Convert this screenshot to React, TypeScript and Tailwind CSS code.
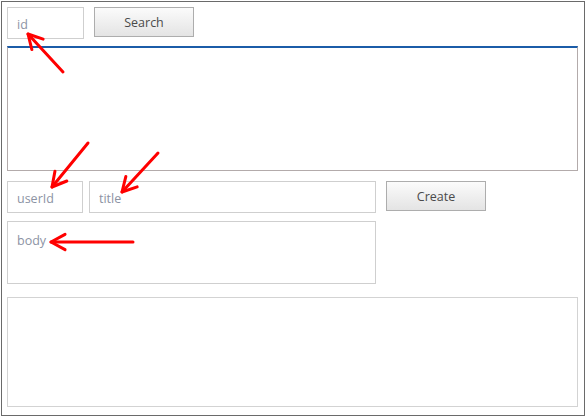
import React from "react";

const font = { fontFamily: '"Open Sans", "Noto Sans", sans-serif' };

function TextBox({ placeholder, className }: { placeholder: string; className: string }) {
  return (
    <input
      placeholder={placeholder}
      className={`border border-[#cfcfcf] bg-white pl-[9px] pt-[2px] text-[12.5px] text-[#444] placeholder:text-[#8c93a4] outline-none ${className}`}
      style={font}
    />
  );
}

function Button({ label }: { label: string }) {
  return (
    <button
      className="w-[100px] h-[30px] pt-[2px] border border-[#adadad] bg-gradient-to-b from-[#fbfbfb] to-[#e4e4e4] text-[12.5px] text-[#4a4a4a]"
      style={font}
    >
      {label}
    </button>
  );
}

// red annotation arrows drawn over the form
function Arrow({ x1, y1, x2, y2 }: { x1: number; y1: number; x2: number; y2: number }) {
  const a = Math.atan2(y1 - y2, x1 - x2);
  const len = 16;
  const spread = 0.5;
  const w1x = x2 + len * Math.cos(a + spread);
  const w1y = y2 + len * Math.sin(a + spread);
  const w2x = x2 + len * Math.cos(a - spread);
  const w2y = y2 + len * Math.sin(a - spread);
  return (
    <g stroke="#ff0000" strokeWidth={3} fill="none" strokeLinecap="round" strokeLinejoin="round">
      <line x1={x1} y1={y1} x2={x2} y2={y2} />
      <polyline points={`${w1x},${w1y} ${x2},${y2} ${w2x},${w2y}`} />
    </g>
  );
}

export default function App() {
  return (
    <div className="relative w-[585px] h-[416px] bg-white pt-px pl-px">
      <div className="w-[584px] h-[415px] border border-[#6a6a6a] p-[5px] flex flex-col">
        <div className="flex items-start gap-[10px]">
          <TextBox placeholder="id" className="w-[77px] h-[32px]" />
          <Button label="Search" />
        </div>

        <div className="mt-[7px] w-[571px] h-[125px] border border-[#b3abab] border-t-2 border-t-[#1b5ca8]" />

        <div className="mt-[10px] flex items-start">
          <TextBox placeholder="userId" className="w-[76px] h-[32px]" />
          <TextBox placeholder="title" className="ml-[6px] w-[287px] h-[32px]" />
          <div className="ml-[10px]">
            <Button label="Create" />
          </div>
        </div>

        <textarea
          placeholder="body"
          className="mt-[8px] w-[369px] h-[63px] resize-none border border-[#cfcfcf] pl-[9px] pt-[11px] text-[12.5px] leading-[16px] placeholder:text-[#8c93a4] outline-none"
          style={font}
        />

        <div className="mt-[13px] w-[571px] h-[110px] border border-[#d3d3d3]" />
      </div>

      <svg className="absolute top-0 left-0 pointer-events-none" width={585} height={416}>
        <Arrow x1={63} y1={72} x2={28} y2={34} />
        <Arrow x1={88} y1={143} x2={52} y2={187} />
        <Arrow x1={158} y1={153} x2={122} y2={192} />
        <Arrow x1={133} y1={242} x2={51} y2={242} />
      </svg>
    </div>
  );
}
